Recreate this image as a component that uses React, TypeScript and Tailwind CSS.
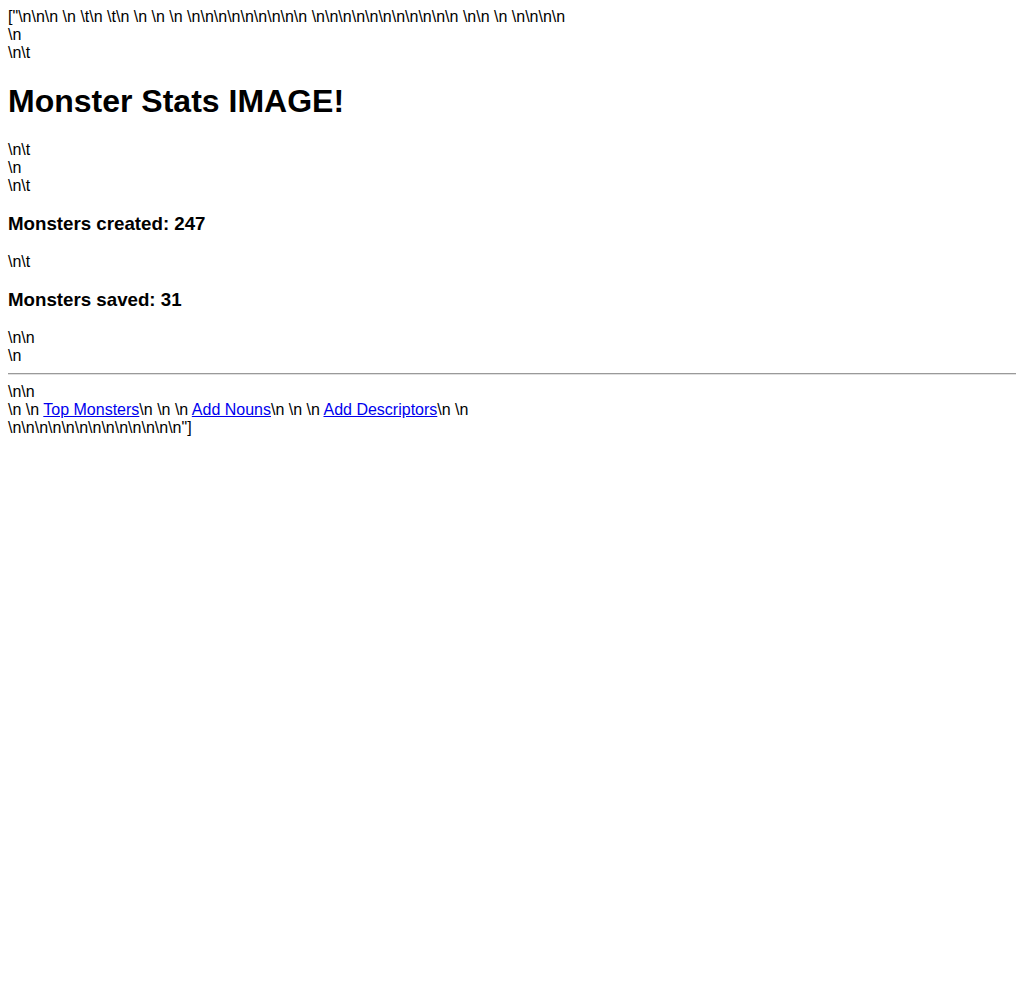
export default function App() {
  const line = "leading-[18px]";
  return (
    <div className="m-2 bg-white text-base text-black" style={{ fontFamily: '"Liberation Sans", Arial, sans-serif' }}>
      <div className={line}>
        {'["\\n\\n\\n \\n \\t\\n \\t\\n \\n \\n \\n \\n\\n\\n\\n\\n\\n\\n\\n\\n \\n\\n\\n\\n\\n\\n\\n\\n\\n\\n\\n \\n\\n \\n \\n\\n\\n\\n'}
      </div>
      <div className={line}>{"\\n"}</div>
      <div className={line}>{"\\n\\t"}</div>
      <h1 className="my-[21px] text-[32px] font-bold leading-[37px]">Monster Stats IMAGE!</h1>
      <div className={line}>{"\\n\\t"}</div>
      <div className={line}>{"\\n"}</div>
      <div className={line}>{"\\n\\t"}</div>
      <h3 className="my-[18px] text-[18.72px] font-bold leading-[22px]">Monsters created: 247</h3>
      <div className={line}>{"\\n\\t"}</div>
      <h3 className="my-[18px] text-[18.72px] font-bold leading-[22px]">Monsters saved: 31</h3>
      <div className={line}>{"\\n\\n"}</div>
      <div className={line}>{"\\n"}</div>
      <hr className="my-2 border-t border-b border-t-[#9a9a9a] border-b-[#e0e0e0]" />
      <div className={line}>{"\\n\\n"}</div>
      <div className={line}>
        {"\\n \\n "}
        <a href="#" className="text-[#0000ee] underline">Top Monsters</a>
        {"\\n \\n \\n "}
        <a href="#" className="text-[#0000ee] underline">Add Nouns</a>
        {"\\n \\n \\n "}
        <a href="#" className="text-[#0000ee] underline">Add Descriptors</a>
        {"\\n \\n"}
      </div>
      <div className={line}>{'\\n\\n\\n\\n\\n\\n\\n\\n\\n\\n\\n\\n\\n"]'}</div>
    </div>
  );
}
